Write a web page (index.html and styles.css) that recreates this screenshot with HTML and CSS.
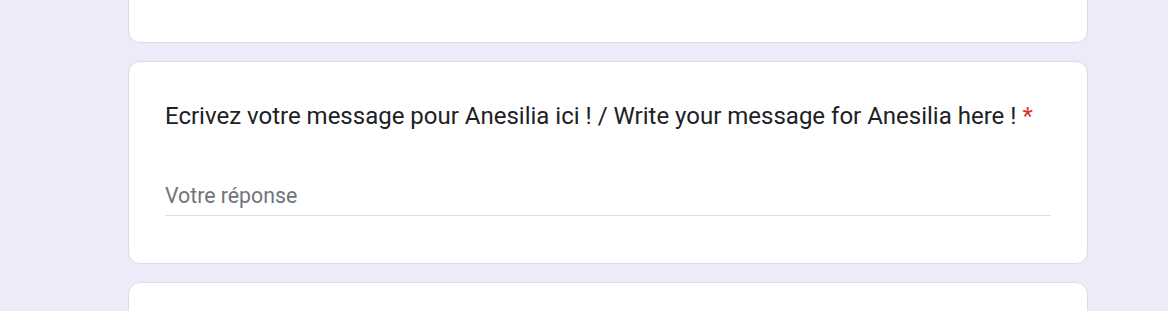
FILE: index.html
```html
<!DOCTYPE html>
<html lang="fr">
<head>
<meta charset="utf-8">
<title>Formulaire</title>
<link rel="stylesheet" href="styles.css">
</head>
<body>
<main class="page">
  <section class="card card-top"></section>
  <section class="card card-question">
    <div class="question-title">Ecrivez votre message pour Anesilia ici ! / Write your message for Anesilia here !<span class="required">*</span></div>
    <div class="answer">
      <span class="placeholder">Votre réponse</span>
    </div>
  </section>
  <section class="card card-bottom"></section>
</main>
</body>
</html>
```
FILE: styles.css
```css
html, body {
  margin: 0;
  padding: 0;
  height: 100%;
  overflow: hidden;
}
body {
  background: #edebf9;
  font-family: Roboto, "Liberation Sans", Arial, sans-serif;
  color: #202124;
}
.page {
  display: flex;
  flex-direction: column;
  gap: 18px;
  width: 960px;
  margin-left: 128px;
  margin-top: -40px;
}
.card {
  box-sizing: border-box;
  background: #fff;
  border: 1px solid #dadce0;
  border-radius: 12px;
}
.card-top {
  height: 83px;
}
.card-question {
  height: 203px;
  padding: 36px 36px 0 36px;
}
.card-bottom {
  height: 100px;
}
.question-title {
  font-size: 24px;
  line-height: 36px;
  letter-spacing: 0;
}
.required {
  color: #d93025;
  margin-left: 6px;
}
.answer {
  margin-top: 46px;
  padding-top: 2px;
  border-bottom: 1px solid #e0e0e0;
  height: 36px;
  box-sizing: border-box;
}
.placeholder {
  color: #70757a;
  font-size: 21.3px;
  line-height: 28px;
}
```
